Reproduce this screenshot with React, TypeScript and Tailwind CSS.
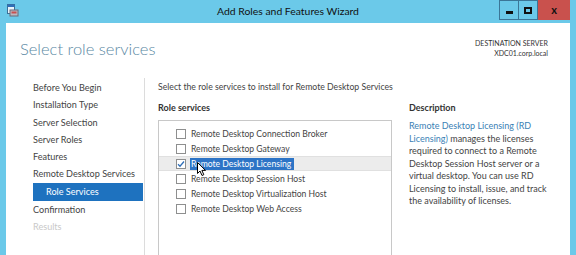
import React from "react";

const font = { fontFamily: 'Lato, "Open Sans", sans-serif' };

function Checkbox({ checked }: { checked?: boolean }) {
  return (
    <div className="w-[10px] h-[10px] border border-[#8e8f8f] bg-white flex items-center justify-center shrink-0">
      {checked && (
        <svg width="8" height="8" viewBox="0 0 8 8">
          <path d="M1 4.2 L3 6.2 L7 1.5" fill="none" stroke="#2f6fb8" strokeWidth="1.3" />
        </svg>
      )}
    </div>
  );
}

export default function App() {
  const nav = [
    "Before You Begin",
    "Installation Type",
    "Server Selection",
    "Server Roles",
    "Features",
    "Remote Desktop Services",
  ];
  const services = [
    "Remote Desktop Connection Broker",
    "Remote Desktop Gateway",
    "Remote Desktop Licensing",
    "Remote Desktop Session Host",
    "Remote Desktop Virtualization Host",
    "Remote Desktop Web Access",
  ];
  return (
    <div
      className="w-[576px] h-[255px] bg-[#6bc9e9] flex flex-col overflow-hidden text-[#444]"
      style={font}
    >
      {/* Title bar */}
      <div className="h-[23px] flex items-start shrink-0">
        <div className="w-[21px] pl-[7px] pt-[4px]">
          <svg width="12" height="13" viewBox="0 0 12 13">
            <rect x="0.5" y="0.5" width="7" height="9" fill="#e8f3fa" stroke="#3b6f96" />
            <rect x="0.5" y="0.5" width="7" height="2.5" fill="#2f6fb8" />
            <rect x="3" y="6" width="8" height="6" fill="#b9b9c2" stroke="#6b6b78" />
            <rect x="4.5" y="7.5" width="5" height="2" fill="#c75050" />
          </svg>
        </div>
        <div className="flex-1 text-center text-[10.4px] leading-[23px] text-[#111] pl-[56px] whitespace-nowrap">
          Add Roles and Features Wizard
        </div>
        <div className="flex h-[22px]">
          <div className="w-[20px] h-[20px] border border-[#3b7697] flex items-center justify-center">
            <div className="w-[7px] h-[3px] bg-[#111] mt-[4px]" />
          </div>
          <div className="w-[19px] h-[20px] border border-l-0 border-[#3b7697] flex items-center justify-center">
            <div className="w-[8px] h-[7px] border-[2px] border-[#111]" />
          </div>
          <div className="w-[32px] h-[20px] bg-[#c9514d] flex items-center justify-center text-[#111] font-bold text-[11px] mr-[6px]">
            x
          </div>
        </div>
      </div>

      {/* Client */}
      <div className="flex-1 mx-[6px] bg-white flex flex-col">
        {/* Header */}
        <div className="h-[55px] flex justify-between shrink-0">
          <div className="pl-[14px] pt-[13px] text-[16.5px] font-light text-[#5a88a3] leading-[26px] whitespace-nowrap">
            Select role services
          </div>
          <div className="pr-[22px] pt-[15px] text-right text-[7px] leading-[10px] text-[#333] whitespace-nowrap">
            <div>DESTINATION SERVER</div>
            <div>XDC01.corp.local</div>
          </div>
        </div>

        {/* Body */}
        <div className="flex flex-1 min-h-0">
          {/* Nav */}
          <div className="w-[139px] shrink-0 pt-[1px] border-r border-[#dcdcdc] text-[9.1px] whitespace-nowrap">
            {nav.map((n) => (
              <div key={n} className="h-[17.3px] leading-[17.3px] pl-[27px]">
                {n}
              </div>
            ))}
            <div className="h-[18px] leading-[18px] ml-[27px] mr-[1px] bg-[#1e72bf] text-white pl-[13px]">
              Role Services
            </div>
            <div className="h-[17.3px] leading-[17.3px] pl-[27px]">Confirmation</div>
            <div className="h-[17.3px] leading-[17.3px] pl-[27px] text-[#c9c9c9]">Results</div>
          </div>

          {/* Main */}
          <div className="flex-1 pl-[13px] pt-[2px]">
            <div className="text-[8.7px] leading-[14px] whitespace-nowrap">
              Select the role services to install for Remote Desktop Services
            </div>
            <div className="flex mt-[7px]">
              <div className="w-[234px]">
                <div className="text-[9px] font-bold leading-[14px] text-[#333]">Role services</div>
                <div className="mt-[5px] h-[140px] border border-[#c8c8c8] pt-[5px] relative">
                  {services.map((s, i) => (
                    <div
                      key={s}
                      className={
                        i === 2
                          ? "h-[15px] flex items-center pl-[17px] bg-[#ececec] border-y border-[#e0e0e0]"
                          : "h-[15px] flex items-center pl-[17px]"
                      }
                    >
                      <Checkbox checked={i === 2} />
                      <span
                        className={
                          i === 2
                            ? "ml-[4px] text-[8.6px] leading-[12px] bg-[#2d74c6] text-white pl-[1px] pr-[3px] whitespace-nowrap"
                            : "ml-[5px] text-[8.6px] leading-[12px] whitespace-nowrap"
                        }
                      >
                        {s}
                      </span>
                    </div>
                  ))}
                  <svg
                    className="absolute left-[38px] top-[41px]"
                    width="10"
                    height="15"
                    viewBox="0 0 10 15"
                  >
                    <path
                      d="M0.5 0.5 L0.5 11.5 L3 9 L5 13.5 L6.8 12.7 L4.9 8.4 L8.5 8.4 Z"
                      fill="white"
                      stroke="black"
                      strokeWidth="1"
                      strokeLinejoin="round"
                    />
                  </svg>
                </div>
              </div>
              <div className="ml-[17px] text-[9px]">
                <div className="font-bold leading-[14px] text-[#333]">Description</div>
                <div className="mt-[5px] leading-[12.5px] whitespace-nowrap">
                  <span className="text-[#3a7fb5]">Remote Desktop Licensing (RD</span>
                  <br />
                  <span className="text-[#3a7fb5]">Licensing)</span> manages the licenses
                  <br />
                  required to connect to a Remote
                  <br />
                  Desktop Session Host server or a
                  <br />
                  virtual desktop. You can use RD
                  <br />
                  Licensing to install, issue, and track
                  <br />
                  the availability of licenses.
                </div>
              </div>
            </div>
          </div>
        </div>
      </div>
    </div>
  );
}
